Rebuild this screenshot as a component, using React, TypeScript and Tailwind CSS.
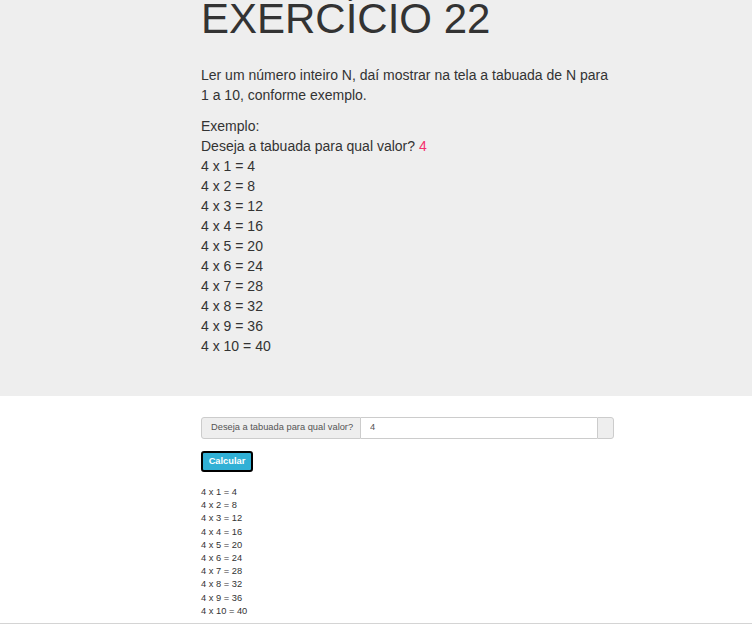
import { useState } from 'react';

const App = () => {
  const [valor, setValor] = useState('4');
  const [n, setN] = useState(4);

  const linhas = Array.from({ length: 10 }, (_, i) => i + 1);

  return (
    <div className="min-h-screen bg-white text-[#333] font-['Liberation_Sans',Arial,sans-serif]">
      <div className="bg-[#eeeeee] pb-[40px]">
        <div className="ml-[201px] w-[413px]">
          <h1 className="text-[42px] leading-[38px] font-normal">EXERCÍCIO 22</h1>
          <p className="mt-[27px] text-[14px] leading-[20px]">
            Ler um número inteiro N, daí mostrar na tela a tabuada de N para 1 a 10, conforme exemplo.
          </p>
          <div className="mt-[11px] text-[14px] leading-[20px]">
            <div>Exemplo:</div>
            <div>
              Deseja a tabuada para qual valor? <span className="text-[#f4306d]">4</span>
            </div>
            {linhas.map((i) => (
              <div key={i}>
                4 x {i} = {4 * i}
              </div>
            ))}
          </div>
        </div>
      </div>

      <div className="ml-[201px] w-[413px] pt-[21px]">
        <div className="flex h-[22px] text-[9.3px] text-[#555]">
          <span className="flex items-center w-[160px] pl-[9px] bg-[#eeeeee] border border-[#cccccc] rounded-l-[3px]">
            Deseja a tabuada para qual valor?
          </span>
          <input
            value={valor}
            onChange={(e) => setValor(e.target.value)}
            className="flex-1 min-w-0 px-[9px] bg-white border-y border-[#cccccc] outline-none text-[9.3px] text-[#555]"
          />
          <span className="w-[17px] bg-[#eeeeee] border border-[#cccccc] rounded-r-[3px]" />
        </div>

        <button
          type="button"
          onClick={() => setN(Number(valor) || 0)}
          className="mt-[12px] w-[52px] h-[21px] bg-[#31b0d5] border-2 border-black rounded-[3px] text-white font-bold text-[9.3px] leading-none"
        >
          Calcular
        </button>

        <div className="mt-[14px] text-[9.3px] leading-[13.2px] text-[#333]">
          {linhas.map((i) => (
            <div key={i}>
              {n} x {i} = {n * i}
            </div>
          ))}
        </div>
      </div>
      <div className="mt-[5px] h-px bg-[#d4d4d4]" />
    </div>
  );
};

export default App;
